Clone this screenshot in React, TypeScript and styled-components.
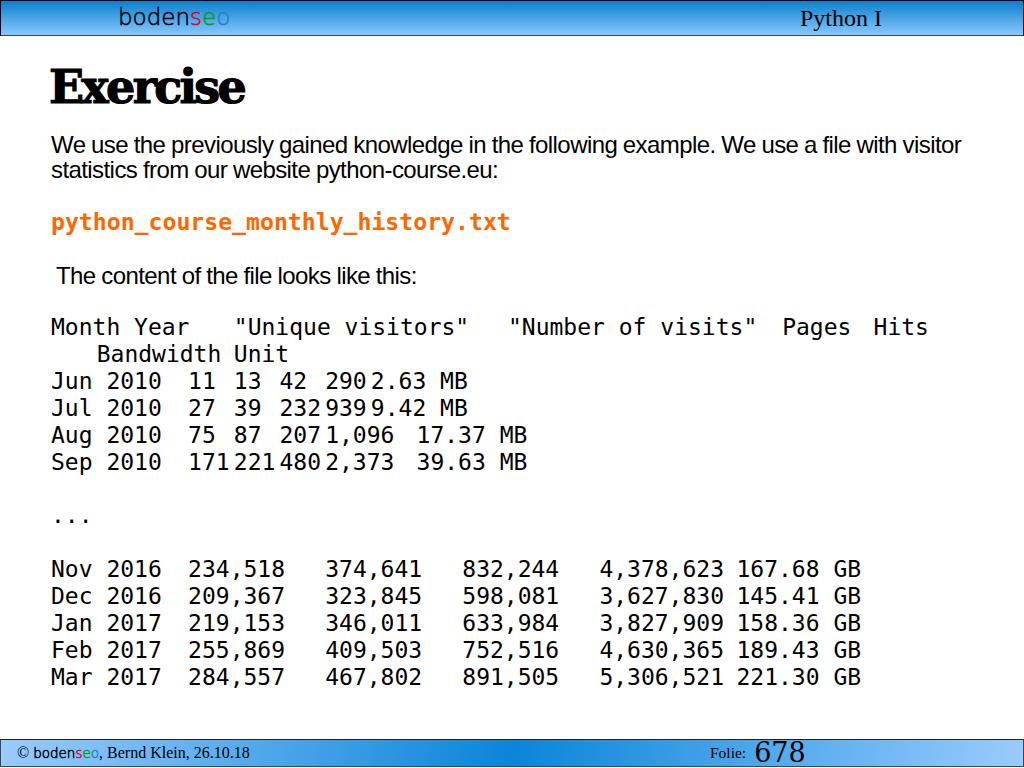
import { createGlobalStyle, styled } from "styled-components";

const TAB = 45.7;

const GlobalStyle = createGlobalStyle`
  html, body {
    margin: 0;
    padding: 0;
    background: #ffffff;
  }
`;

const Slide = styled.div`
  width: 1024px;
  height: 768px;

  display: flex;
  flex-direction: column;

  overflow: hidden;
`;

const Header = styled.header`
  height: 36px;
  box-sizing: border-box;
  padding-left: 117px;
  padding-bottom: 2px;

  display: flex;
  align-items: center;

  border: 1px solid #000000;
  border-bottom-color: #444444;
  background: linear-gradient(180deg, #0a80cc 0%, #87c8ff 100%);
`;

const Logo = styled.span<{ $size: number; $stroke: number }>`
  font-family: "DejaVu Sans", sans-serif;
  font-size: ${({ $size }) => $size}px;
  font-weight: 200;
  color: #000000;
  -webkit-text-stroke: ${({ $stroke }) => $stroke}px currentColor;
`;

const LogoLetters = styled.span<{ $color: string }>`
  color: ${({ $color }) => $color};
`;

const HeaderTitle = styled.div`
  margin-left: auto;
  margin-right: 141px;
  margin-top: 2px;

  font-family: "Liberation Serif", serif;
  font-size: 24px;
  color: #000000;
`;

const Main = styled.main`
  flex: 1;
  padding: 26px 40px 0 51px;
`;

const Title = styled.h1`
  margin: 0 0 0 -2px;

  font-family: "DejaVu Serif", serif;
  font-size: 46px;
  font-weight: 700;
  line-height: 50px;
  letter-spacing: -2.7px;
  color: #000000;
  -webkit-text-stroke: 1.2px #000000;
`;

const Paragraph = styled.p<{ $indent?: number; $top: number }>`
  margin: ${({ $top }) => $top}px 0 0 ${({ $indent }) => $indent ?? 0}px;

  font-family: "Liberation Sans", sans-serif;
  font-size: 24px;
  line-height: 25px;
  letter-spacing: -0.58px;
  word-spacing: -0.4px;
  color: #000000;
`;

const FileName = styled.div`
  margin-top: 27px;

  font-family: "DejaVu Sans Mono", monospace;
  font-size: 23.15px;
  font-weight: 700;
  line-height: 27px;
  color: #ff6600;
`;

const Listing = styled.div`
  margin-top: 26px;

  font-family: "DejaVu Sans Mono", monospace;
  font-size: 23px;
  line-height: 26.92px;
  color: #000000;
`;

const Row = styled.div`
  min-height: 26.92px;

  display: flex;
`;

const Cell = styled.span<{ $span: number }>`
  flex: none;
  width: ${({ $span }) => $span * TAB}px;

  white-space: pre;
`;

const Footer = styled.footer`
  height: 28px;
  box-sizing: border-box;
  margin-bottom: 1px;
  padding-left: 16px;

  display: flex;
  align-items: center;

  border: 1px solid #444444;
  border-top-color: #222222;
  background: linear-gradient(100deg, #99ccff 0%, #0a85d8 50%, #99ccff 100%);
`;

const Credit = styled.div`
  width: 693px;

  font-family: "Liberation Serif", serif;
  font-size: 16px;
  color: #000000;
`;

const SlideLabel = styled.span`
  font-family: "Liberation Serif", serif;
  font-size: 15.5px;
  color: #000000;
`;

const SlideNumber = styled.span`
  margin-left: 8px;
  margin-top: -1px;

  font-family: "DejaVu Serif", serif;
  font-size: 27px;
  line-height: 24px;
  color: #000000;
`;

// each cell is [text, width in tab stops]
type ListingCell = [string, number];

const wide = (cells: string[]): ListingCell[] =>
  cells.map((text) => [text, 3] as ListingCell);

const rows: ListingCell[][] = [
  [
    ["Month Year", 4],
    ['"Unique visitors"', 6],
    ['"Number of visits"', 6],
    ["Pages", 2],
    ["Hits", 2],
  ],
  [
    ["", 1],
    ["Bandwidth", 3],
    ["Unit", 2],
  ],
  [["Jun 2010", 3], ["11", 1], ["13", 1], ["42", 1], ["290", 1], ["2.63 MB", 3]],
  [["Jul 2010", 3], ["27", 1], ["39", 1], ["232", 1], ["939", 1], ["9.42 MB", 3]],
  [["Aug 2010", 3], ["75", 1], ["87", 1], ["207", 1], ["1,096", 2], ["17.37 MB", 3]],
  [["Sep 2010", 3], ["171", 1], ["221", 1], ["480", 1], ["2,373", 2], ["39.63 MB", 3]],
  [],
  [["...", 2]],
  [],
  wide(["Nov 2016", "234,518", "374,641", "832,244", "4,378,623", "167.68 GB"]),
  wide(["Dec 2016", "209,367", "323,845", "598,081", "3,627,830", "145.41 GB"]),
  wide(["Jan 2017", "219,153", "346,011", "633,984", "3,827,909", "158.36 GB"]),
  wide(["Feb 2017", "255,869", "409,503", "752,516", "4,630,365", "189.43 GB"]),
  wide(["Mar 2017", "284,557", "467,802", "891,505", "5,306,521", "221.30 GB"]),
];

function Brand({ size, stroke }: { size: number; stroke: number }) {
  return (
    <Logo $size={size} $stroke={stroke}>
      boden
      <LogoLetters $color="#e0001a">s</LogoLetters>
      <LogoLetters $color="#0a9a1e">e</LogoLetters>
      <LogoLetters $color="#2a80c0">o</LogoLetters>
    </Logo>
  );
}

export default function App() {
  return (
    <Slide>
      <GlobalStyle />
      <Header>
        <Brand size={23} stroke={0.5} />
        <HeaderTitle>Python I</HeaderTitle>
      </Header>
      <Main>
        <Title>Exercise</Title>
        <Paragraph $top={20}>
          We use the previously gained knowledge in the following example. We
          use a file with visitor statistics from our website python-course.eu:
        </Paragraph>
        <FileName>python_course_monthly_history.txt</FileName>
        <Paragraph $top={27} $indent={5}>
          The content of the file looks like this:
        </Paragraph>
        <Listing>
          {rows.map((cells, i) => (
            <Row key={i}>
              {cells.map(([text, span], j) => (
                <Cell key={j} $span={span}>
                  {text}
                </Cell>
              ))}
            </Row>
          ))}
        </Listing>
      </Main>
      <Footer>
        <Credit>
          © <Brand size={13.5} stroke={0.5} />, Bernd Klein, 26.10.18
        </Credit>
        <SlideLabel>Folie:</SlideLabel>
        <SlideNumber>678</SlideNumber>
      </Footer>
    </Slide>
  );
}
